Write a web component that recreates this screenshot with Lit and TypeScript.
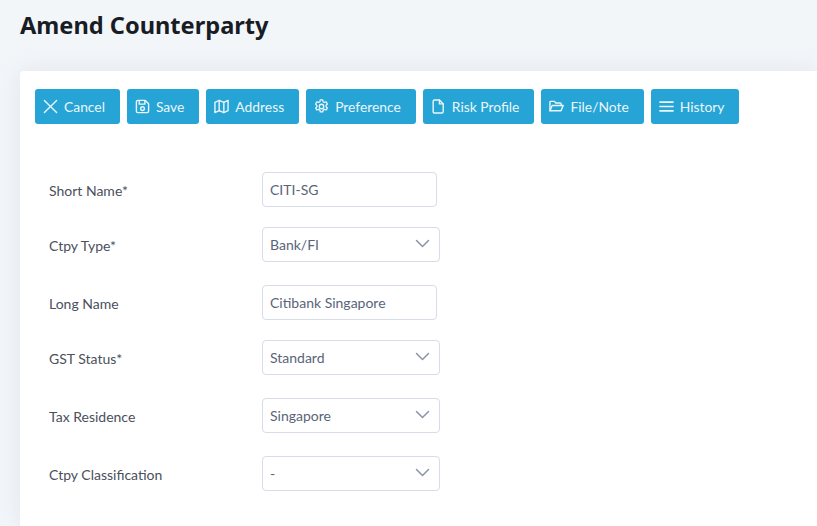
import { LitElement, html, css, svg } from "lit";
import { customElement } from "lit/decorators.js";

const ic = (body: unknown, stroke = 1.6) => html`<svg class="ic" viewBox="0 0 16 16" fill="none" stroke="currentColor" stroke-width=${stroke} stroke-linecap="round" stroke-linejoin="round">${body}</svg>`;

const icons: Record<string, unknown> = {
  cancel: html`<svg class="ic" viewBox="0 0 16 16" fill="none" stroke="currentColor" stroke-width="1.5" stroke-linecap="round"><path d="M1.500 1.500 14.500 14.500M14.500 1.500 1.500 14.500"/></svg>`,
  save: ic(svg`<path d="M1.500 3A1.500 1.500 0 0 1 3 1.500h8L14.500 5v8a1.500 1.500 0 0 1-1.500 1.500H3A1.500 1.500 0 0 1 1.500 13Z"/><path d="M4.500 1.700V5.500h6V1.700"/><circle cx="8" cy="10.200" r="2"/>`, 1.5),
  map: ic(svg`<path d="M1 3.500 5.500 1.500l5 2 4.500-2v11l-4.500 2-5-2-4.500 2Z"/><path d="M5.500 1.500v11M10.500 3.500v11"/>`, 1.5),
  gear: ic(svg`<circle cx="8" cy="8" r="2.400"/><path d="M6.700 1h2.600l.4 1.900 1.400.8 1.900-.6 1.300 2.200-1.400 1.300v1.600l1.400 1.300-1.300 2.200-1.900-.6-1.400.8-.4 1.900H6.700l-.4-1.900-1.400-.8-1.900.6-1.300-2.200 1.400-1.300V7.200L1.700 5.300 3 3.100l1.900.6 1.400-.8Z"/>`, 1.4),
  file: ic(svg`<path d="M3.800 1h5.200l4 4.200v8.300a1.500 1.500 0 0 1-1.500 1.500H3.800a1.500 1.500 0 0 1-1.500-1.500v-11A1.500 1.500 0 0 1 3.800 1Z"/><path d="M9 1v4.200h4"/>`, 1.5),
  folder: ic(svg`<path d="M1 12.500V3.500a1 1 0 0 1 1-1h3.800l1.500 1.800h4.700a1 1 0 0 1 1 1V7"/><path d="M1 12.500 3.400 7h11.800l-2.400 5.500Z"/>`, 1.5),
  bars: ic(svg`<path d="M1 3.300h14M1 8h14M1 12.700h14"/>`, 1.7),
};

const buttons: [string, string][] = [
  ["cancel", "Cancel"], ["save", "Save"], ["map", "Address"], ["gear", "Preference"],
  ["file", "Risk Profile"], ["folder", "File/Note"], ["bars", "History"],
];

type Row = { label: string; value: string; select?: boolean; cls: string };
const rows: Row[] = [
  { label: "Short Name*", value: "CITI-SG", cls: "" },
  { label: "Ctpy Type*", value: "Bank/FI", select: true, cls: "g20" },
  { label: "Long Name", value: "Citibank Singapore", cls: "g23" },
  { label: "GST Status*", value: "Standard", select: true, cls: "g20" },
  { label: "Tax Residence", value: "Singapore", select: true, cls: "g23" },
  { label: "Ctpy Classification", value: "-", select: true, cls: "g23" },
];

@customElement("app-root")
export class AppRoot extends LitElement {
  static styles = css`
    :host { display: block; width: 817px; height: 526px; overflow: hidden; background: #f3f6f9; font-family: Lato, "Noto Sans", sans-serif; }
    h1 { margin: 0; padding: 8px 0 0 20px; height: 71px; box-sizing: border-box; font: 700 23.600px/34px "Noto Sans", "Open Sans", sans-serif; color: #181c24; }
    .card { margin-left: 20px; height: 455px; background: #fff; border-radius: 4px 0 0 0; box-shadow: 0 0 24px rgba(160,175,195,.22); padding: 18px 0 0 15px; box-sizing: border-box; }
    .bar { display: flex; gap: 7px; margin-bottom: 48px; }
    .btn { display: flex; align-items: center; gap: 6px; height: 35px; box-sizing: border-box; padding: 0 15px 0 8px; background: #26a4d5; color: #eaf6fb; border-radius: 3px; font: 400 13.850px/35px Lato, "Noto Sans", sans-serif; white-space: nowrap; }
    .ic { width: 15px; height: 15px; flex: none; }
    .row { display: flex; align-items: center; height: 35px; }
    .g20 { margin-top: 20px; }
    .g23 { margin-top: 23px; }
    .row label { width: 227px; padding: 1px 0 0 14px; box-sizing: border-box; font-size: 14px; color: #4a505c; white-space: nowrap; }
    .field { display: flex; align-items: center; justify-content: space-between; width: 175px; height: 35px; box-sizing: border-box; padding: 0 7px; background: #fff; border: 1px solid #d8dbe8; border-radius: 4px; font-size: 14px; color: #5a6479; white-space: nowrap; }
    .field.sel { width: 178px; padding-right: 9px; }
    .chev { width: 15px; height: 9px; color: #8a93a8; margin-top: -2px; }
  `;

  render() {
    return html`
      <h1>Amend Counterparty</h1>
      <section class="card">
        <div class="bar">
          ${buttons.map(([i, t]) => html`<div class="btn">${icons[i]}<span>${t}</span></div>`)}
        </div>
        ${rows.map((r) => html`
          <div class="row ${r.cls}">
            <label>${r.label}</label>
            <div class="field ${r.select ? "sel" : ""}">
              <span>${r.value}</span>
              ${r.select ? html`<svg class="chev" viewBox="0 0 15 9" fill="none" stroke="currentColor" stroke-width="1.5" stroke-linecap="round" stroke-linejoin="round"><path d="M1.500 1.500 7.500 7.500 13.500 1.500"/></svg>` : ""}
            </div>
          </div>`)}
      </section>
    `;
  }
}
